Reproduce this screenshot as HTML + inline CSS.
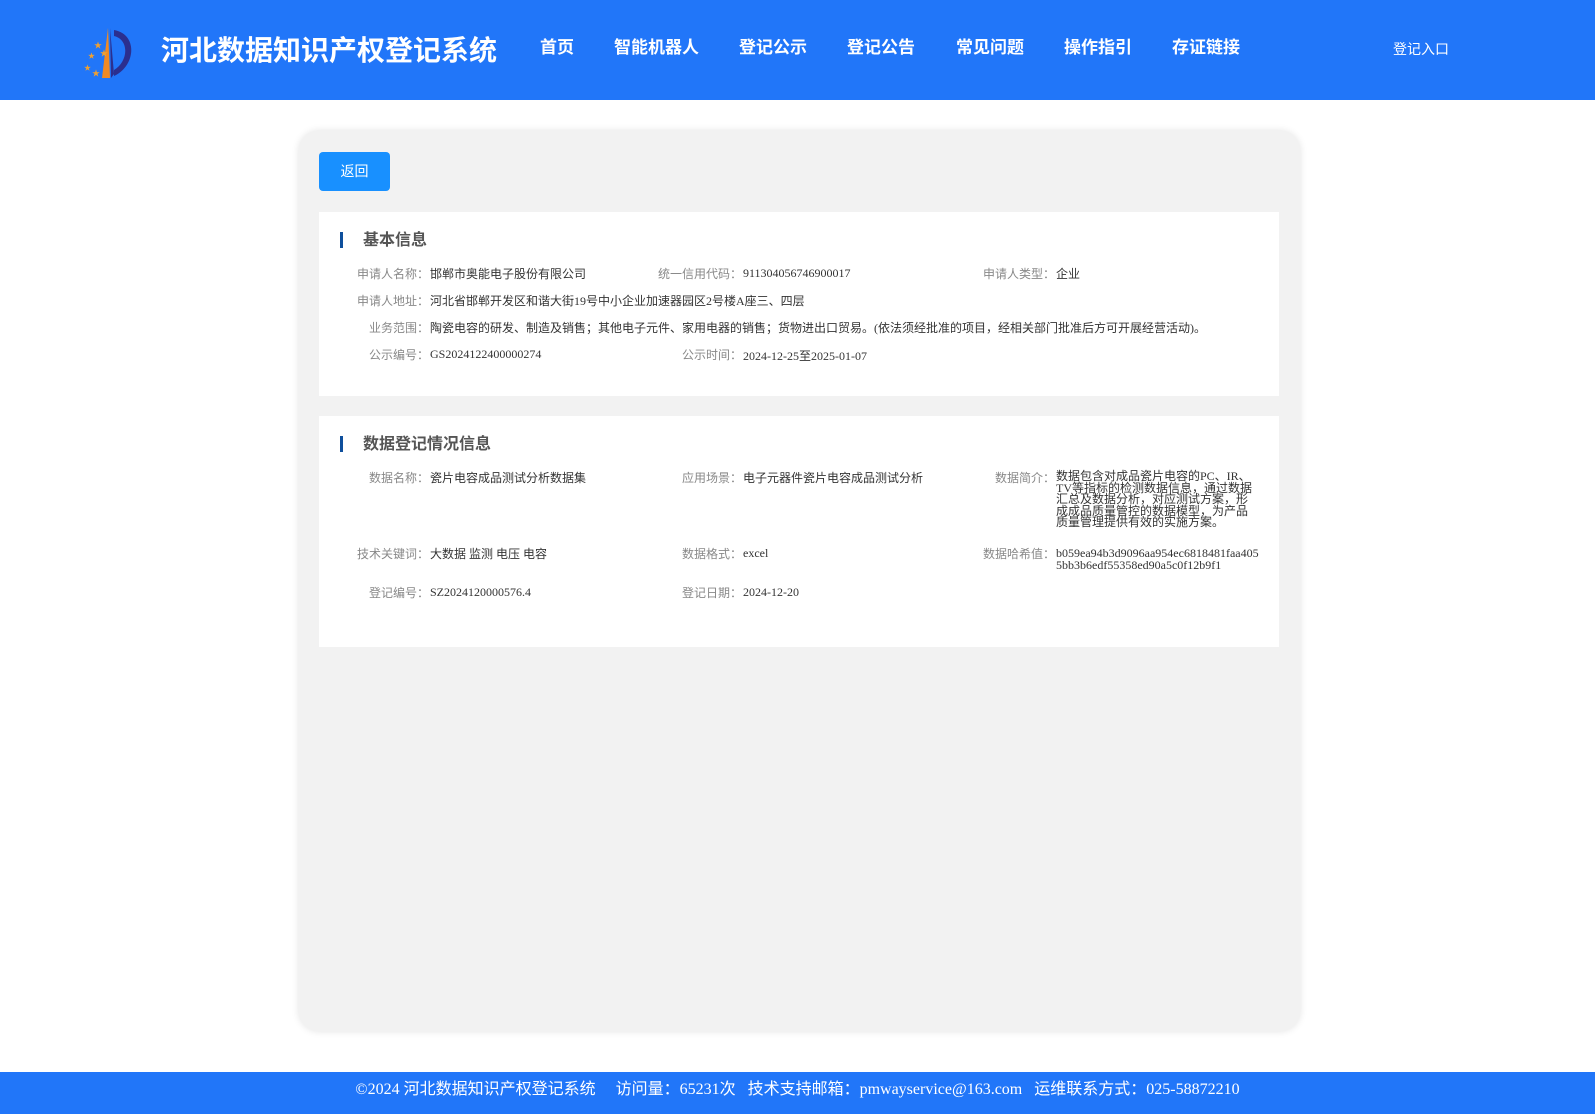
<!DOCTYPE html>
<html><head><meta charset="utf-8"><style>
*{margin:0;padding:0;box-sizing:border-box}
body{width:1595px;height:1114px;background:#fff;position:relative;overflow:hidden;font-family:"Liberation Serif","Noto Sans CJK SC",serif}
.hd{position:absolute;left:0;top:0;width:1595px;height:100px;background:#2176f9}
.ab{position:absolute;white-space:nowrap}
.nav{font-family:"Liberation Sans","Noto Sans CJK SC",sans-serif;font-weight:bold;font-size:17px;color:#fff;top:33px}
.card{position:absolute;left:299px;top:131px;width:1001px;height:900px;background:#f2f2f2;border-radius:20px;box-shadow:0 0 8px rgba(0,0,0,.12)}
.btn{position:absolute;left:319px;top:152px;width:71px;height:39px;background:#1890ff;border-radius:4px;color:#fff;font-size:14px;text-align:center;line-height:39px;font-family:"Liberation Sans","Noto Sans CJK SC",sans-serif}
.sec{position:absolute;left:319px;width:960px;background:#fff}
.bar{position:absolute;width:3px;height:16px;background:#0e4f9c}
.tt{font-family:"Liberation Sans","Noto Sans CJK SC",sans-serif;font-weight:bold;font-size:16px;color:#555}
.l{font-size:12px;color:#888;text-align:right;font-family:"Liberation Sans","Noto Sans CJK SC",sans-serif}
.v{font-size:12px;color:#333}
.ft{position:absolute;left:0;top:1072px;width:1595px;height:42px;background:#2176f9;color:#fff;font-size:16px;text-align:center;line-height:36px}
</style></head><body>
<div class="hd">
<svg class="ab" style="left:80px;top:26px" width="56" height="54" viewBox="0 0 56 54">
<path d="M28 2 L22 52 L30 52 Z" fill="#f08a24"/>
<path d="M30 2 L31 52 L34 48 Z" fill="#2b2f8f"/>
<path d="M34 4 C58 8 56 40 34 50 L34 44 C48 36 50 14 34 10 Z" fill="#2b2f8f"/>
<text x="14" y="22" font-size="8" fill="#f0a030">★</text>
<text x="8" y="32" font-size="7" fill="#f0a030">★</text>
<text x="4" y="44" font-size="7" fill="#f0a030">★</text>
<text x="12" y="50" font-size="8" fill="#f0a030">★</text>
<text x="20" y="30" font-size="8" fill="#f0a030">★</text>
</svg>
<div class="ab" style="left:161px;top:29px;font-size:28px;font-weight:bold;color:#fff;font-family:'Liberation Sans','Noto Sans CJK SC',sans-serif">河北数据知识产权登记系统</div>
<div class="ab nav" style="left:540px">首页</div>
<div class="ab nav" style="left:614px">智能机器人</div>
<div class="ab nav" style="left:739px">登记公示</div>
<div class="ab nav" style="left:847px">登记公告</div>
<div class="ab nav" style="left:956px">常见问题</div>
<div class="ab nav" style="left:1064px">操作指引</div>
<div class="ab nav" style="left:1172px">存证链接</div>
<div class="ab" style="left:1393px;top:39px;font-size:14px;color:#fff;font-family:'Liberation Sans','Noto Sans CJK SC',sans-serif">登记入口</div>
</div>
<div class="card"></div>
<div class="btn">返回</div>
<div class="sec" style="top:212px;height:184px"></div>
<div class="bar" style="left:340px;top:232px"></div>
<div class="ab tt" style="left:363px;top:226px">基本信息</div>
<div class="ab l" style="right:1166px;top:265px">申请人名称：</div><div class="ab v" style="left:430px;top:265px">邯郸市奥能电子股份有限公司</div>
<div class="ab l" style="right:853px;top:265px">统一信用代码：</div><div class="ab v" style="left:743px;top:266px">911304056746900017</div>
<div class="ab l" style="right:540px;top:265px">申请人类型：</div><div class="ab v" style="left:1056px;top:265px">企业</div>
<div class="ab l" style="right:1166px;top:292px">申请人地址：</div><div class="ab v" style="left:430px;top:292px">河北省邯郸开发区和谐大街19号中小企业加速器园区2号楼A座三、四层</div>
<div class="ab l" style="right:1166px;top:319px">业务范围：</div><div class="ab v" style="left:430px;top:319px">陶瓷电容的研发、制造及销售；其他电子元件、家用电器的销售；货物进出口贸易。(依法须经批准的项目，经相关部门批准后方可开展经营活动)。</div>
<div class="ab l" style="right:1166px;top:346px">公示编号：</div><div class="ab v" style="left:430px;top:347px">GS2024122400000274</div>
<div class="ab l" style="right:853px;top:346px">公示时间：</div><div class="ab v" style="left:743px;top:347px">2024-12-25至2025-01-07</div>

<div class="sec" style="top:416px;height:231px"></div>
<div class="bar" style="left:340px;top:436px"></div>
<div class="ab tt" style="left:363px;top:430px">数据登记情况信息</div>
<div class="ab l" style="right:1166px;top:469px">数据名称：</div><div class="ab v" style="left:430px;top:469px">瓷片电容成品测试分析数据集</div>
<div class="ab l" style="right:853px;top:469px">应用场景：</div><div class="ab v" style="left:743px;top:469px">电子元器件瓷片电容成品测试分析</div>
<div class="ab l" style="right:540px;top:469px">数据简介：</div><div class="ab v" style="left:1056px;top:471px;width:198px;white-space:normal;line-height:11.5px">数据包含对成品瓷片电容的PC、IR、TV等指标的检测数据信息，通过数据汇总及数据分析，对应测试方案，形成成品质量管控的数据模型，为产品质量管理提供有效的实施方案。</div>
<div class="ab l" style="right:1166px;top:545px">技术关键词：</div><div class="ab v" style="left:430px;top:545px">大数据 监测 电压 电容</div>
<div class="ab l" style="right:853px;top:545px">数据格式：</div><div class="ab v" style="left:743px;top:546px">excel</div>
<div class="ab l" style="right:540px;top:545px">数据哈希值：</div><div class="ab v" style="left:1056px;top:547px;width:208px;white-space:normal;word-break:break-all;line-height:12px">b059ea94b3d9096aa954ec6818481faa4055bb3b6edf55358ed90a5c0f12b9f1</div>
<div class="ab l" style="right:1166px;top:584px">登记编号：</div><div class="ab v" style="left:430px;top:585px">SZ2024120000576.4</div>
<div class="ab l" style="right:853px;top:584px">登记日期：</div><div class="ab v" style="left:743px;top:585px">2024-12-20</div>

<div class="ft">©2024 河北数据知识产权登记系统 &nbsp;&nbsp;&nbsp; 访问量：65231次 &nbsp;&nbsp;技术支持邮箱：pmwayservice@163.com &nbsp;&nbsp;运维联系方式：025-58872210</div>
</body></html>
